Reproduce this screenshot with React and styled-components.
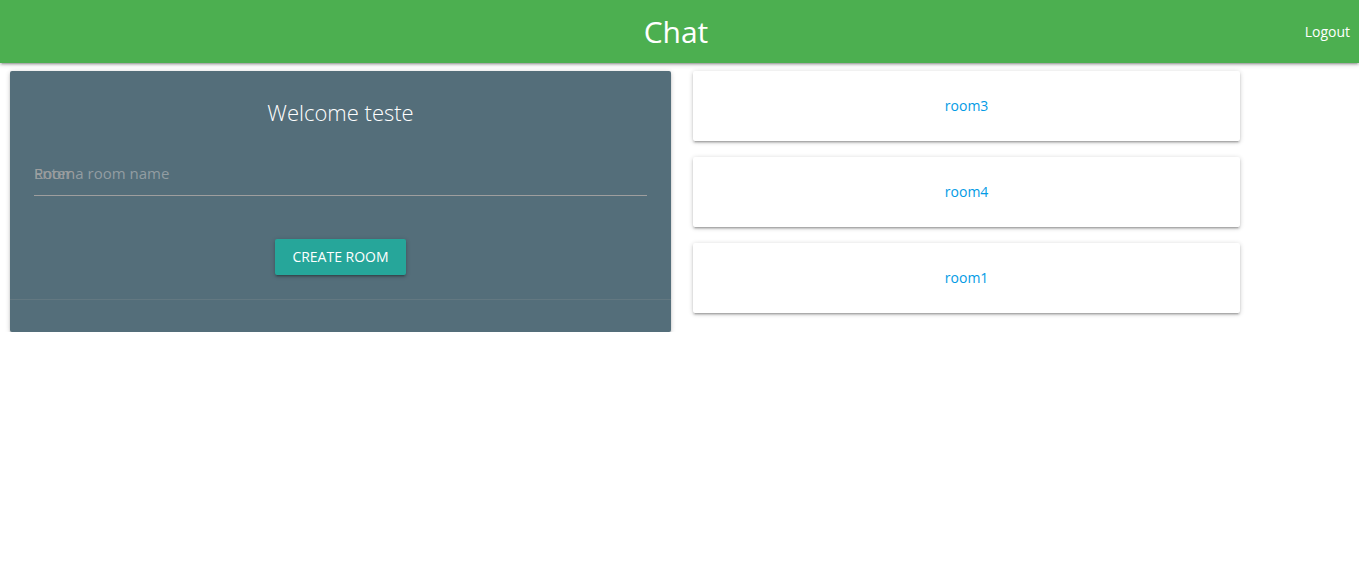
import React from "react";
import styled, { createGlobalStyle } from "styled-components";

const GlobalStyle = createGlobalStyle`
  *, *::before, *::after { box-sizing: border-box; }
  body {
    margin: 0;
    background: #fff;
    color: rgba(0, 0, 0, 0.87);
    font-family: "Segoe UI", "Open Sans", "Noto Sans", sans-serif;
    font-size: 14px;
    line-height: 22px;
    overflow-x: hidden;
  }
`;

const raised = `box-shadow: 0 2px 2px 0 rgba(0, 0, 0, 0.14), 0 3px 1px -2px rgba(0, 0, 0, 0.12), 0 1px 5px 0 rgba(0, 0, 0, 0.2);`;

const NavBar = styled.nav`
  display: grid;
  grid-template-columns: 1fr auto 1fr;
  align-items: center;
  height: 63px;
  padding: 0 9px 0 2px;
  background: #4caf50;
  ${raised}
`;

const Brand = styled.a`
  grid-column: 2;
  color: #fff;
  font-size: 30px;
  line-height: 64px;
  text-decoration: none;
`;

const NavLink = styled.a`
  justify-self: end;
  color: #fff;
  line-height: 62px;
  text-decoration: none;
`;

const Row = styled.main`
  display: flex;
  align-items: flex-start;
  margin: 8px -6px 0 -1px;
`;

const Column = styled.div`
  flex: 0 0 calc(100% * ${(p) => p.$span} / 12);
  padding: 0 11px;
`;

const Card = styled.section`
  border-radius: 2px;
  background: #546e7a;
  color: #fff;
  ${raised}
`;

const CardContent = styled.form`
  display: flex;
  flex-direction: column;
  align-items: center;
  padding: 24px;
`;

const CardTitle = styled.h1`
  margin: 0 0 22px;
  font-size: 22px;
  font-weight: 300;
  line-height: 34px;
`;

const Field = styled.div`
  position: relative;
  width: 100%;
  margin-bottom: 43px;
`;

const FieldLabel = styled.label`
  position: absolute;
  top: 0;
  left: 0;
  color: #9e9e9e;
  font-size: 15px;
  line-height: 44px;
  pointer-events: none;
`;

const TextInput = styled.input`
  display: block;
  width: 100%;
  height: 45px;
  padding: 0;
  border: 0;
  border-bottom: 1px solid #9e9e9e;
  border-radius: 0;
  outline: 0;
  background: transparent;
  color: #fff;
  font: inherit;
  font-size: 15px;

  &::placeholder { color: #929da2; opacity: 1; }
  &:focus { border-bottom-color: #26a69a; }
`;

const Button = styled.button`
  height: 36px;
  padding: 0 17px;
  border: 0;
  border-radius: 2px;
  background: #26a69a;
  color: #fff;
  font: inherit;
  font-size: 14px;
  line-height: 36px;
  text-transform: uppercase;
  cursor: pointer;
  ${raised}
`;

const CardAction = styled.div`
  height: 33px;
  border-top: 1px solid rgba(160, 160, 160, 0.2);
`;

const RoomList = styled.div`
  display: flex;
  flex-direction: column;
  gap: 16px;
`;

const RoomCard = styled.div`
  padding: 24px;
  border-radius: 2px;
  background: #fff;
  text-align: center;
  ${raised}
`;

const RoomLink = styled.a`
  color: #039be5;
  text-decoration: none;
`;

const rooms = ["room3", "room4", "room1"];

export default function App() {
  return (
    <>
      <GlobalStyle />
      <NavBar>
        <Brand href="#">Chat</Brand>
        <NavLink href="#logout">Logout</NavLink>
      </NavBar>
      <Row>
        <Column $span={6}>
          <Card>
            <CardContent onSubmit={(e) => e.preventDefault()}>
              <CardTitle>Welcome teste</CardTitle>
              <Field>
                <TextInput id="room" type="text" placeholder="Enter a room name" />
                <FieldLabel htmlFor="room">Room</FieldLabel>
              </Field>
              <Button type="submit">Create room</Button>
            </CardContent>
            <CardAction />
          </Card>
        </Column>
        <Column $span={5}>
          <RoomList>
            {rooms.map((room) => (
              <RoomCard key={room}>
                <RoomLink href={`#${room}`}>{room}</RoomLink>
              </RoomCard>
            ))}
          </RoomList>
        </Column>
      </Row>
    </>
  );
}
